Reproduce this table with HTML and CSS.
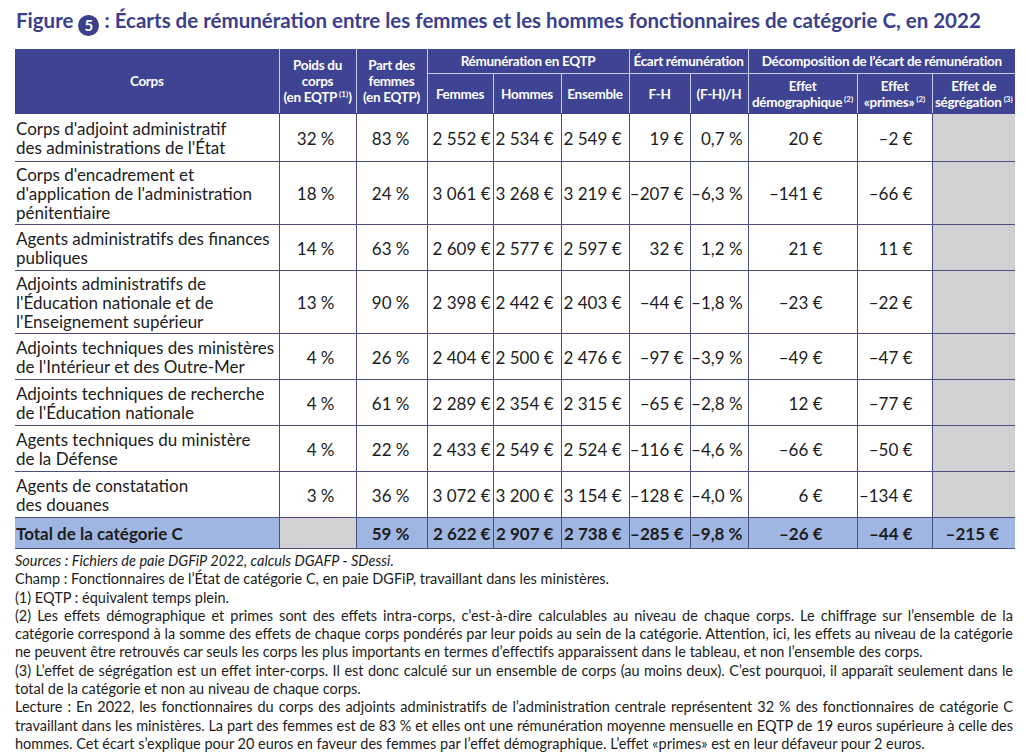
FILE: index.html
```html
<!DOCTYPE html>
<html lang="fr">
<head>
<meta charset="utf-8">
<title>Figure 5</title>
<link rel="stylesheet" href="styles.css">
</head>
<body>
<div class="page">
  <h1 class="title">Figure <span class="num">5</span> : Écarts de rémunération entre les femmes et les hommes fonctionnaires de catégorie C, en 2022</h1>
  <table class="tbl">
    <colgroup>
      <col class="w-corps"><col class="w-poids"><col class="w-part"><col class="w-fem"><col class="w-hom"><col class="w-ens"><col class="w-fh"><col class="w-fhh"><col class="w-demo"><col class="w-prim"><col class="w-seg">
    </colgroup>
    <thead>
      <tr class="h1">
        <th rowspan="2">Corps</th>
        <th rowspan="2">Poids du<br>corps<br>(en EQTP<sup>(1)</sup>)</th>
        <th rowspan="2">Part des<br>femmes<br>(en EQTP)</th>
        <th colspan="3">Rémunération en EQTP</th>
        <th colspan="2">Écart rémunération</th>
        <th colspan="3">Décomposition de l’écart de rémunération</th>
      </tr>
      <tr class="h2">
        <th>Femmes</th>
        <th>Hommes</th>
        <th>Ensemble</th>
        <th>F-H</th>
        <th>(F-H)/H</th>
        <th>Effet<br>démographique<sup>(2)</sup></th>
        <th>Effet<br>«primes»<sup>(2)</sup></th>
        <th>Effet de<br>ségrégation<sup>(3)</sup></th>
      </tr>
    </thead>
    <tbody>
      <tr class="r2"><td>Corps d'adjoint administratif<br>des administrations de l'État</td><td>32 %</td><td>83 %</td><td>2 552 €</td><td>2 534 €</td><td>2 549 €</td><td>19 €</td><td>0,7 %</td><td>20 €</td><td>–2 €</td><td class="na"></td></tr>
      <tr class="r3"><td>Corps d'encadrement et<br>d'application de l'administration<br>pénitentiaire</td><td>18 %</td><td>24 %</td><td>3 061 €</td><td>3 268 €</td><td>3 219 €</td><td>–207 €</td><td>–6,3 %</td><td>–141 €</td><td>–66 €</td><td class="na"></td></tr>
      <tr><td>Agents administratifs des finances<br>publiques</td><td>14 %</td><td>63 %</td><td>2 609 €</td><td>2 577 €</td><td>2 597 €</td><td>32 €</td><td>1,2 %</td><td>21 €</td><td>11 €</td><td class="na"></td></tr>
      <tr class="r3"><td>Adjoints administratifs de<br>l'Éducation nationale et de<br>l'Enseignement supérieur</td><td>13 %</td><td>90 %</td><td>2 398 €</td><td>2 442 €</td><td>2 403 €</td><td>–44 €</td><td>–1,8 %</td><td>–23 €</td><td>–22 €</td><td class="na"></td></tr>
      <tr><td>Adjoints techniques des ministères<br>de l'Intérieur et des Outre-Mer</td><td>4 %</td><td>26 %</td><td>2 404 €</td><td>2 500 €</td><td>2 476 €</td><td>–97 €</td><td>–3,9 %</td><td>–49 €</td><td>–47 €</td><td class="na"></td></tr>
      <tr><td>Adjoints techniques de recherche<br>de l'Éducation nationale</td><td>4 %</td><td>61 %</td><td>2 289 €</td><td>2 354 €</td><td>2 315 €</td><td>–65 €</td><td>–2,8 %</td><td>12 €</td><td>–77 €</td><td class="na"></td></tr>
      <tr><td>Agents techniques du ministère<br>de la Défense</td><td>4 %</td><td>22 %</td><td>2 433 €</td><td>2 549 €</td><td>2 524 €</td><td>–116 €</td><td>–4,6 %</td><td>–66 €</td><td>–50 €</td><td class="na"></td></tr>
      <tr><td>Agents de constatation<br>des douanes</td><td>3 %</td><td>36 %</td><td>3 072 €</td><td>3 200 €</td><td>3 154 €</td><td>–128 €</td><td>–4,0 %</td><td>6 €</td><td>–134 €</td><td class="na"></td></tr>
      <tr class="total"><td>Total de la catégorie C</td><td class="na"></td><td>59 %</td><td>2 622 €</td><td>2 907 €</td><td>2 738 €</td><td>–285 €</td><td>–9,8 %</td><td>–26 €</td><td>–44 €</td><td>–215 €</td></tr>
    </tbody>
  </table>
  <div class="notes">
    <p class="src">Sources : Fichiers de paie DGFiP 2022, calculs DGAFP - SDessi.</p>
    <p>Champ : Fonctionnaires de l’État de catégorie C, en paie DGFiP, travaillant dans les ministères.</p>
    <p>(1) EQTP : équivalent temps plein.</p>
    <p>(2) Les effets démographique et primes sont des effets intra-corps, c’est-à-dire calculables au niveau de chaque corps. Le chiffrage sur l’ensemble de la catégorie correspond à la somme des effets de chaque corps pondérés par leur poids au sein de la catégorie. Attention, ici, les effets au niveau de la catégorie ne peuvent être retrouvés car seuls les corps les plus importants en termes d’effectifs apparaissent dans le tableau, et non l’ensemble des corps.</p>
    <p>(3) L’effet de ségrégation est un effet inter-corps. Il est donc calculé sur un ensemble de corps (au moins deux). C’est pourquoi, il apparaît seulement dans le total de la catégorie et non au niveau de chaque corps.</p>
    <p>Lecture : En 2022, les fonctionnaires du corps des adjoints administratifs de l’administration centrale représentent 32 % des fonctionnaires de catégorie C travaillant dans les ministères. La part des femmes est de 83 % et elles ont une rémunération moyenne mensuelle en EQTP de 19 euros supérieure à celle des hommes. Cet écart s’explique pour 20 euros en faveur des femmes par l’effet démographique. L’effet «primes» est en leur défaveur pour 2 euros.</p>
  </div>
</div>
</body>
</html>
```

FILE: styles.css
```css
html, body {
  margin: 0;
  padding: 0;
  background: #ffffff;
}

body {
  font-family: Lato, "Liberation Sans", sans-serif;
  color: #1c1c1c;
}

.page {
  padding: 8px 11px 0 15px;
}

.title {
  margin: 0 0 13px 1px;
  font-size: 20.5px;
  line-height: 24px;
  font-weight: 700;
  color: #3b3f8c;
  white-space: nowrap;
}

.num {
  display: inline-block;
  width: 21px;
  height: 21px;
  border-radius: 50%;
  background: #3b3f8c;
  color: #ffffff;
  font-size: 15px;
  line-height: 21px;
  text-align: center;
  vertical-align: -3px;
}

.tbl {
  width: 1000px;
  border-collapse: collapse;
  table-layout: fixed;
}

.w-corps { width: 264px; }
.w-poids { width: 77px; }
.w-part { width: 71px; }
.w-fem { width: 66px; }
.w-hom { width: 68px; }
.w-ens { width: 68px; }
.w-fh { width: 61px; }
.w-fhh { width: 58px; }
.w-demo { width: 109px; }
.w-prim { width: 75px; }
.w-seg { width: 83px; }

.tbl th {
  background: #3e4493;
  color: #ffffff;
  font-weight: 700;
  font-size: 13.5px;
  letter-spacing: -0.3px;
  line-height: 16px;
  text-align: center;
  vertical-align: middle;
  padding: 0 1px;
  border: 1px solid #c9cce8;
  border-top: none;
}

.tbl thead tr.h1 th { height: 24px; }
.tbl thead tr.h2 th { height: 39px; }

.tbl thead th:first-child { border-left: none; }
.tbl thead tr.h1 th:last-child,
.tbl thead tr.h2 th:last-child { border-right: none; }
.tbl thead tr.h2 th { border-bottom: 1px solid #3e4493; }
.tbl thead tr.h1 th[rowspan] { border-bottom: 1px solid #3e4493; }

.tbl sup {
  font-size: 8px;
  line-height: 0;
  vertical-align: 5px;
  margin-left: 2px;
  letter-spacing: 0;
}

.tbl td {
  font-size: 17px;
  line-height: 19px;
  padding: 4px 0 3px;
  border: 1px solid #4a4e7d;
  text-align: right;
  vertical-align: middle;
  white-space: nowrap;
}

.tbl tr.r2 td {
  padding-top: 5px;
  padding-bottom: 4px;
}

.tbl tr.r3 td {
  padding-top: 3px;
  padding-bottom: 2px;
}

.tbl td:first-child {
  text-align: left;
  padding-left: 1px;
  border-left: none;
}

.tbl td:last-child { border-right: none; }

.tbl td:nth-child(2) { padding-right: 21px; }
.tbl td:nth-child(3) { padding-right: 17px; }
.tbl td:nth-child(4) { padding-right: 2px; }
.tbl td:nth-child(5) { padding-right: 7px; }
.tbl td:nth-child(6) { padding-right: 7px; }
.tbl td:nth-child(7) { padding-right: 6px; }
.tbl td:nth-child(8) { padding-right: 5px; }
.tbl td:nth-child(9) { padding-right: 34px; }
.tbl td:nth-child(10) { padding-right: 19px; }
.tbl td:nth-child(11) { padding-right: 16px; }

.tbl td.na { background: #d1d1d4; }

.tbl tr.total td {
  background: #a0b6e2;
  font-weight: 700;
  padding-top: 6px;
  padding-bottom: 5px;
}

.tbl tr.total td.na { background: #d1d1d4; }

.notes {
  margin-top: 3px;
  width: 998px;
  font-size: 14.5px;
  line-height: 18.3px;
  color: #1c1c1c;
}

.notes p {
  margin: 0;
  text-align: justify;
}

.notes .src { font-style: italic; }
```
